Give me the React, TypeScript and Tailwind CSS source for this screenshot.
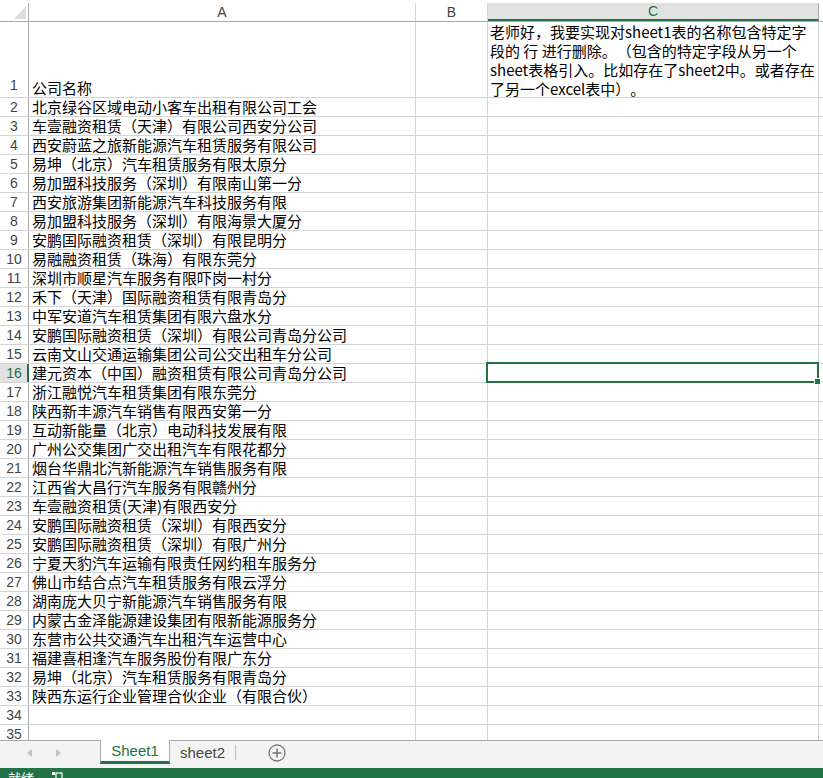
import React from "react";

const rows: string[] = [
  "北京绿谷区域电动小客车出租有限公司工会",
  "车壹融资租赁（天津）有限公司西安分公司",
  "西安蔚蓝之旅新能源汽车租赁服务有限公司",
  "易坤（北京）汽车租赁服务有限太原分",
  "易加盟科技服务（深圳）有限南山第一分",
  "西安旅游集团新能源汽车科技服务有限",
  "易加盟科技服务（深圳）有限海景大厦分",
  "安鹏国际融资租赁（深圳）有限昆明分",
  "易融融资租赁（珠海）有限东莞分",
  "深圳市顺星汽车服务有限吓岗一村分",
  "禾下（天津）国际融资租赁有限青岛分",
  "中军安道汽车租赁集团有限六盘水分",
  "安鹏国际融资租赁（深圳）有限公司青岛分公司",
  "云南文山交通运输集团公司公交出租车分公司",
  "建元资本（中国）融资租赁有限公司青岛分公司",
  "浙江融悦汽车租赁集团有限东莞分",
  "陕西新丰源汽车销售有限西安第一分",
  "互动新能量（北京）电动科技发展有限",
  "广州公交集团广交出租汽车有限花都分",
  "烟台华鼎北汽新能源汽车销售服务有限",
  "江西省大昌行汽车服务有限赣州分",
  "车壹融资租赁(天津)有限西安分",
  "安鹏国际融资租赁（深圳）有限西安分",
  "安鹏国际融资租赁（深圳）有限广州分",
  "宁夏天豹汽车运输有限责任网约租车服务分",
  "佛山市结合点汽车租赁服务有限云浮分",
  "湖南庞大贝宁新能源汽车销售服务有限",
  "内蒙古金泽能源建设集团有限新能源服务分",
  "东营市公共交通汽车出租汽车运营中心",
  "福建喜相逢汽车服务股份有限广东分",
  "易坤（北京）汽车租赁服务有限青岛分",
  "陕西东运行企业管理合伙企业（有限合伙）",
  "",
  "",
];

function RowHeader({ n, active }: { n: number; active?: boolean }) {
  return (
    <div
      className={
        active
          ? "w-[29px] shrink-0 h-full flex items-center justify-center bg-[#e1e1e1] text-[#217346] border-r-2 border-[#217346] font-['Liberation_Sans',sans-serif] text-[14px] pl-[1px]"
          : "w-[29px] shrink-0 h-full flex items-center justify-center text-[#444] border-r border-[#ababab] font-['Liberation_Sans',sans-serif] text-[14px]"
      }
    >
      {n}
    </div>
  );
}

export default function App() {
  return (
    <div className="w-[823px] h-[778px] overflow-hidden bg-white flex flex-col font-['Noto_Sans_CJK_SC',sans-serif] [text-spacing-trim:space-all]">
      {/* grid */}
      <div className="h-[740px] overflow-hidden flex flex-col shrink-0">
        {/* column header */}
        <div className="flex h-[22px] shrink-0 border-b border-[#ababab] font-['Liberation_Sans',sans-serif] text-[14px] text-[#444]">
          <div className="w-[29px] shrink-0 pt-[3px]">
            <div className="h-full border-r border-[#ababab] relative">
              <svg className="absolute left-[14px] top-[3px]" width="12" height="13" viewBox="0 0 12 13">
                <polygon points="12,0 12,13 0,13" fill="#dcdcdc" />
              </svg>
            </div>
          </div>
          <div className="w-[387px] shrink-0 pt-[3px]">
            <div className="h-full border-r border-[#d4d4d4] flex items-center justify-center">A</div>
          </div>
          <div className="w-[72px] shrink-0 pt-[3px]">
            <div className="h-full border-r border-[#d4d4d4] flex items-center justify-center">B</div>
          </div>
          <div className="w-[331px] shrink-0 pt-[3px]">
            <div className="h-full bg-[#e1e1e1] border-r border-[#ababab] border-b-2 border-b-[#217346] flex items-center justify-center text-[#217346] mb-[-1px]">
              C
            </div>
          </div>
          <div className="flex-1 pt-[3px]">
            <div className="h-full"></div>
          </div>
        </div>

        {/* row 1 */}
        <div className="flex h-[76px] shrink-0 border-b border-[#d4d4d4] text-[15px] text-black">
          <div className="w-[29px] shrink-0 h-full flex items-end justify-center text-[#444] border-r border-[#ababab] font-['Liberation_Sans',sans-serif] text-[14px] pb-[1px]">
            1
          </div>
          <div className="w-[387px] shrink-0 h-full border-r border-[#d4d4d4] pl-[3px] flex items-end leading-[18px] whitespace-nowrap">
            公司名称
          </div>
          <div className="w-[72px] shrink-0 h-full border-r border-[#d4d4d4]"></div>
          <div className="w-[331px] shrink-0 h-full border-r border-[#d4d4d4] pl-[2px] leading-[19px] whitespace-nowrap">
            老师好，我要实现对sheet1表的名称包含特定字
            <br />
            段的 行 进行删除。（包含的特定字段从另一个
            <br />
            sheet表格引入。比如存在了sheet2中。或者存在
            <br />
            了另一个excel表中）。
          </div>
          <div className="flex-1"></div>
        </div>

        {rows.map((text, i) => {
          const n = i + 2;
          const active = n === 16;
          return (
            <div
              key={n}
              className="flex h-[19px] shrink-0 border-b border-[#d4d4d4] text-[15px] text-black"
            >
              <RowHeader n={n} active={active} />
              <div className="w-[387px] shrink-0 h-full border-r border-[#d4d4d4] pl-[3px] leading-[18px] whitespace-nowrap">
                {text}
              </div>
              <div className="w-[72px] shrink-0 h-full border-r border-[#d4d4d4]"></div>
              <div className="w-[331px] shrink-0 h-full border-r border-[#d4d4d4] relative">
                {active && (
                  <div className="absolute -top-[2px] -left-[2px] -right-[1px] -bottom-[1px] border-2 border-[#217346] z-10">
                    <div className="absolute -right-[4px] -bottom-[4px] w-[7px] h-[7px] bg-[#217346] border border-white"></div>
                  </div>
                )}
              </div>
              <div className="flex-1"></div>
            </div>
          );
        })}
      </div>

      {/* sheet tab bar */}
      <div className="h-[28px] shrink-0 bg-[#f3f3f3] border-t border-[#ababab] flex items-start">
        <div className="w-[100px] shrink-0 h-[24px] flex items-center">
          <svg className="ml-[27px]" width="5" height="8" viewBox="0 0 5 8">
            <polygon points="5,0 5,8 0,4" fill="#c4c4c4" />
          </svg>
          <svg className="ml-[24px]" width="5" height="8" viewBox="0 0 5 8">
            <polygon points="0,0 0,8 5,4" fill="#c4c4c4" />
          </svg>
        </div>
        <div className="w-[70px] h-[24px] -mt-[1px] bg-white border-l border-r border-[#ababab] border-b-[3px] border-b-[#217346] flex items-center justify-center text-[#217346] text-[15px] font-['Liberation_Sans',sans-serif] pt-[1px]">
          Sheet1
        </div>
        <div className="w-[65px] h-[24px] flex items-center justify-center text-[#444] text-[15px] font-['Liberation_Sans',sans-serif]">
          sheet2
        </div>
        <div className="w-[1px] h-[15px] mt-[4px] bg-[#bdbdbd]"></div>
        <div className="ml-[32px] mt-[3px]">
          <svg width="18" height="18" viewBox="0 0 18 18">
            <circle cx="9" cy="9" r="8" fill="none" stroke="#7a7a7a" strokeWidth="1.3" />
            <line x1="9" y1="4.5" x2="9" y2="13.5" stroke="#7a7a7a" strokeWidth="1.6" />
            <line x1="4.5" y1="9" x2="13.5" y2="9" stroke="#7a7a7a" strokeWidth="1.6" />
          </svg>
        </div>
      </div>

      {/* status bar */}
      <div className="h-[10px] shrink-0 bg-[#217346] flex items-start overflow-hidden relative">
        <div className="absolute left-[8px] top-[2px] text-white text-[13px] leading-[16px]">就绪</div>
        <svg className="absolute left-[51px] top-[3px]" width="12" height="8" viewBox="0 0 12 8">
          <rect x="1" y="1" width="3" height="3" fill="#fff" />
          <rect x="5" y="2" width="6" height="6" fill="none" stroke="#fff" strokeWidth="1.2" />
        </svg>
      </div>
    </div>
  );
}
